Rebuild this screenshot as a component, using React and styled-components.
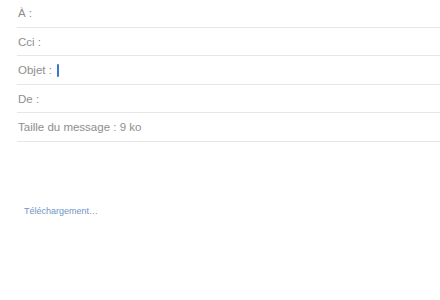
import styled, { createGlobalStyle } from 'styled-components';

const GlobalStyle = createGlobalStyle`
	html, body {
		margin: 0;
		padding: 0;
		background: #ffffff;
	}
	body {
		font-family: "Liberation Sans", Arial, sans-serif;
	}
`;

const rows = [
	{ label: 'À :' },
	{ label: 'Cci :' },
	{ label: 'Objet :', focused: true },
	{ label: 'De :' },
	{ label: 'Taille du message : 9 ko' },
];

const App = () => {
	return (
		<>
			<GlobalStyle />
			<Page>
				<Header>
					{rows.map((row) => (
						<Row key={row.label}>
							<Label>{row.label}</Label>
							{row.focused && <Caret />}
						</Row>
					))}
				</Header>
				<Status>Téléchargement…</Status>
			</Page>
		</>
	);
};

export default App;

const Page = styled.div`
	width: 440px;
	height: 300px;
	overflow: hidden;
	padding-left: 17px;
	box-sizing: border-box;
`;

const Header = styled.div`
	display: flex;
	flex-direction: column;
	margin-top: -1px;
`;

const Row = styled.div`
	display: flex;
	align-items: center;
	gap: 5px;
	height: 28.5px;
	padding: 1px 0 0 1px;
	border-bottom: 1px solid #e6e6e6;
	box-sizing: border-box;
`;

const Label = styled.span`
	font-size: 11.5px;
	color: #8e8e8e;
`;

const Caret = styled.span`
	width: 2.5px;
	height: 13px;
	border-radius: 1px;
	background-color: #3478c6;
`;

const Status = styled.p`
	margin: 64px 0 0 7px;
	font-size: 9px;
	color: #7095c4;
`;
